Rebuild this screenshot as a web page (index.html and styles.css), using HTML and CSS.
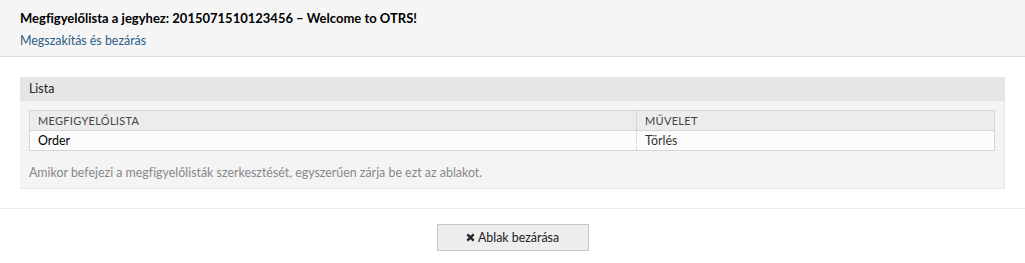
FILE: index.html
```html
<!DOCTYPE html>
<html lang="hu">
<head>
<meta charset="utf-8">
<title>Megfigyelőlista</title>
<link rel="stylesheet" href="styles.css">
</head>
<body>
<header class="head">
  <h1 class="title">Megfigyelőlista a jegyhez: 2015071510123456 – Welcome to OTRS!</h1>
  <a class="cancel" href="#">Megszakítás és bezárás</a>
</header>
<main class="content">
  <section class="box">
    <div class="box-head">Lista</div>
    <div class="box-body">
      <table class="list">
        <thead>
          <tr><th class="c1">Megfigyelőlista</th><th>Művelet</th></tr>
        </thead>
        <tbody>
          <tr><td class="c1">Order</td><td class="action">Törlés</td></tr>
        </tbody>
      </table>
      <p class="hint">Amikor befejezi a megfigyelőlisták szerkesztését, egyszerűen zárja be ezt az ablakot.</p>
    </div>
  </section>
</main>
<footer class="foot">
  <button class="btn" type="button"><svg class="x" viewBox="0 0 10 10" width="9" height="9"><path d="M1.5 1.5 L8.5 8.5 M8.5 1.5 L1.5 8.5" stroke="#222" stroke-width="2.6" stroke-linecap="butt"/></svg>Ablak bezárása</button>
</footer>
</body>
</html>
```
FILE: styles.css
```css
* { box-sizing: border-box; }
html, body { margin: 0; padding: 0; }
body {
  font-family: Lato, "Liberation Sans", sans-serif;
  font-size: 12.4px;
  font-variant-ligatures: none;
  color: #000;
  background: #fff;
  width: 1025px;
}
.head {
  background: #f5f5f5;
  border-bottom: 1px solid #dcdcdc;
  height: 57px;
  padding: 10px 20px 0;
}
.title {
  margin: 0;
  font-size: 13px;
  font-weight: 700;
  line-height: 16px;
}
.cancel {
  display: block;
  margin-top: 7px;
  color: #2b5d87;
  text-decoration: none;
  line-height: 16px;
}
.content {
  padding: 20px 20px 19px;
  border-bottom: 1px solid #ececec;
}
.box {
  background: #f4f4f4;
  border-right: 1px solid #e6e6e6;
  border-bottom: 1px solid #e6e6e6;
}
.box-head {
  background: #e6e6e6;
  height: 24px;
  line-height: 24px;
  padding: 0 9px;
  color: #222;
}
.box-body {
  padding: 9px 9px 8px;
}
.list {
  width: 100%;
  border-collapse: collapse;
  border: 1px solid #d6d6d6;
}
.list th {
  background: #ececec;
  text-align: left;
  font-weight: 400;
  text-transform: uppercase;
  font-size: 11px;
  color: #444;
  height: 20px;
  padding: 0 8px;
  border-bottom: 1px solid #d6d6d6;
  letter-spacing: 0.3px;
}
.list th.c1 { width: 607px; border-right: 1px solid #d6d6d6; }
.list td {
  background: #fcfcfc;
  height: 20px;
  padding: 0 8px;
}
.list td.c1 { border-right: 1px dotted #c8c8c8; }
.list td.action { color: #333; }
.hint {
  margin: 14px 0 0;
  color: #888;
  line-height: 15px;
}
.foot {
  display: flex;
  justify-content: center;
  padding-top: 15px;
}
.btn {
  width: 152px;
  height: 27px;
  background: #eeeeee;
  border: 1px solid #c6c6c6;
  font-family: inherit;
  font-size: 12.4px;
  color: #222;
  display: flex;
  align-items: center;
  justify-content: center;
  gap: 3px;
  padding: 0;
}
.x { display: block; }
```
